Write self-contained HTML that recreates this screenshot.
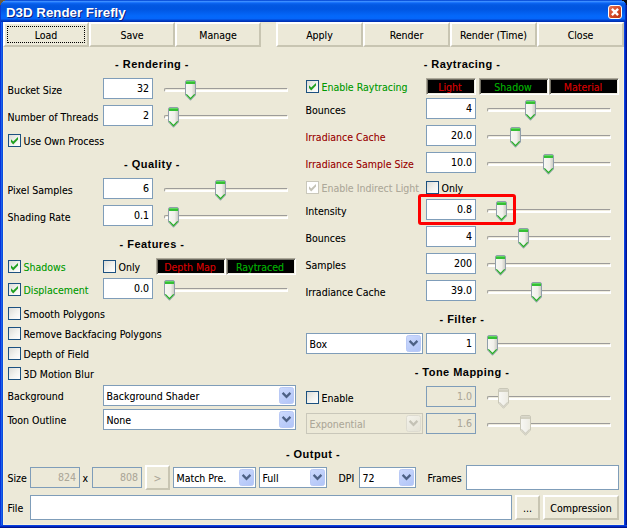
<!DOCTYPE html>
<html><head><meta charset="utf-8"><title>D3D Render Firefly</title>
<style>
html,body{margin:0;padding:0;}
body{width:628px;height:529px;background:#fff;overflow:hidden;position:relative;
 font-family:"DejaVu Sans Condensed","Liberation Sans",sans-serif;font-size:10.5px;color:#000;text-shadow:0 0 0 rgba(0,0,0,.25);}
#win{position:absolute;left:0;top:0;width:627px;height:528px;background:#ece9d8;overflow:hidden;}
#win *{box-sizing:border-box;}
.abs,.lbl,.btn,.inp,.cb,.hd,.trk,.th,.cmb,.dd,.bb{position:absolute;white-space:nowrap;}
#tb{position:absolute;left:0;top:0;width:627px;height:22px;
 background:linear-gradient(to bottom,#0a4fd8 0px,#0f55dd 0.6px,#3b8dff 1.5px,#1c74fb 2.5px,#0a62ee 3.5px,#0358e2 5px,#0055e1 9px,#0360f0 13px,#0468fb 16px,#0566fa 18.6px,#0354e4 19.5px,#0140c8 20.5px,#0031b5 21.5px,#0031b5 22px);}
#tbl{position:absolute;left:0;top:22px;width:3px;height:506px;background:linear-gradient(to right,#0831d9 0,#0831d9 1px,#1a62ea 1px,#1a62ea 2px,#0a4cde 2px);}
#tbr{position:absolute;left:624px;top:22px;width:3px;height:506px;background:linear-gradient(to right,#0a40e0 0,#0a40e0 1px,#0028c0 1px,#0028c0 2px,#001590 2px);}
#tbb{position:absolute;left:0;top:525px;width:627px;height:3px;background:linear-gradient(to bottom,#0a40e0 0,#0a40e0 1px,#0028c0 1px,#0028c0 2px,#001590 2px);}
#title{position:absolute;left:6px;top:5px;font:bold 13.3px/16px "Liberation Sans",sans-serif;color:#fff;text-shadow:1px 1px 0 #0a1f80;}
.lbl{line-height:13px;height:13px;}
.btn{height:25px;border:2px solid;border-color:#fff #c8c5b2 #c8c5b2 #fff;background:#ece9d8;text-align:center;line-height:20px;}
.inp{border:1px solid #7f9db9;background:#fff;text-align:right;padding-right:3px;line-height:16px;}
.inp.dis{background:#ece9d8;color:#aca899;}
.hd{font:bold 11px/14px "Liberation Sans",sans-serif;letter-spacing:0.46px;text-align:center;width:140px;text-shadow:none;}
.cb{width:13px;height:13px;border:1px solid #1c5180;background:linear-gradient(135deg,#dcdcd7 0%,#f3f3ef 55%,#fff 100%);}
.cb.dis{border-color:#cac8bb;background:#fff;}
.trk{height:4px;border:1px solid;border-color:#9d9c99 #fff #fff #9d9c99;background:linear-gradient(#efecde 50%,#fff 50%);border-radius:2px 0 0 2px;}
.th{width:11px;height:21px;}
.cmb{border:1px solid #7f9db9;background:#fff;line-height:21px;padding-left:2.5px;height:21px;}
.cmb.dis{background:#ece9d8;border-color:#c9c7ba;color:#aca899;}
.bb{border:1px solid;border-color:#aca899 #fff #fff #aca899;box-shadow:inset 1px 1px 0 #716f64,inset -1px -1px 0 #f1efe2;padding:1px 2px 1px 0;background:#000;text-align:center;line-height:15px;height:17px;overflow:hidden;}
.g{color:#009900;text-shadow:0 0 0 rgba(0,153,0,.25);} .r{color:#990000;text-shadow:0 0 0 rgba(153,0,0,.25);} .bb.r{color:#cc0000;text-shadow:0 0 0 rgba(204,0,0,.6);} .bb.g{color:#00a800;text-shadow:0 0 0 rgba(0,168,0,.6);} .gr,.dis{color:#aca899;text-shadow:0 0 0 rgba(172,168,153,.25);}
</style></head>
<body>
<div id="win">
<div id="tb"></div><div id="tbl"></div><div id="tbr"></div><div id="tbb"></div>
<div id="title">D3D Render Firefly</div>
<svg class="abs" style="left:608px;top:5px" width="14" height="14" viewBox="0 0 14 14"><defs><linearGradient id="cg" x1="0" x2="1" y1="0" y2="1"><stop offset="0" stop-color="#e8795a"/><stop offset="0.5" stop-color="#d54a26"/><stop offset="1" stop-color="#b8320f"/></linearGradient></defs><rect x="0.5" y="0.5" width="13" height="13" rx="2.5" fill="url(#cg)" stroke="#fff"/><path d="M3.9 3.9 L10.1 10.1 M10.1 3.9 L3.9 10.1" stroke="#fff" stroke-width="2.4" fill="none"/></svg>
<div class="abs" style="left:0px;top:0px;width:1px;height:22px;background:#0a3bd0"></div>
<div class="abs" style="left:626px;top:0px;width:1px;height:22px;background:#001c9c"></div>
<div class="abs" style="left:625px;top:0px;width:1px;height:22px;background:#0632c4"></div>
<div class="abs" style="left:0px;top:0px;width:5px;height:1px;background:#6b5b3d"></div>
<div class="abs" style="left:0px;top:1px;width:3px;height:1px;background:#6b5b3d"></div>
<div class="abs" style="left:0px;top:2px;width:2px;height:1px;background:#6b5b3d"></div>
<div class="abs" style="left:0px;top:3px;width:1px;height:2px;background:#6b5b3d"></div>
<div class="abs" style="left:622px;top:0px;width:6px;height:1px;background:#0c0c10"></div>
<div class="abs" style="left:624px;top:1px;width:4px;height:1px;background:#0c0c10"></div>
<div class="abs" style="left:625px;top:2px;width:3px;height:1px;background:#0c0c10"></div>
<div class="abs" style="left:626px;top:3px;width:2px;height:2px;background:#0c0c10"></div>
<div class="abs" style="left:3px;top:47px;width:1px;height:478px;background:#f6f1dc"></div>
<div class="abs" style="left:623px;top:47px;width:1px;height:478px;background:#f6f1dc"></div>
<div class="abs" style="left:3px;top:524px;width:621px;height:1px;background:#f6f1dc"></div>
<div class="btn " style="left:3px;top:22px;width:86px;height:25px;line-height:22px;">Load</div>
<div class="abs" style="left:7px;top:26px;width:78px;height:17px;border:1px dotted #000"></div>
<div class="btn " style="left:89px;top:22px;width:86px;height:25px;line-height:22px;">Save</div>
<div class="btn " style="left:175px;top:22px;width:86px;height:25px;line-height:22px;">Manage</div>
<div class="btn " style="left:276px;top:22px;width:87px;height:25px;line-height:22px;">Apply</div>
<div class="btn " style="left:363px;top:22px;width:87px;height:25px;line-height:22px;">Render</div>
<div class="btn " style="left:450px;top:22px;width:87px;height:25px;line-height:22px;">Render (Time)</div>
<div class="btn " style="left:537px;top:22px;width:87px;height:25px;line-height:22px;">Close</div>
<div class="hd" style="left:82px;top:57px">- Rendering -</div>
<div class="lbl " style="left:7.5px;top:84px">Bucket Size</div>
<div class="inp " style="left:103px;top:78px;width:50px;height:21px;line-height:18px">32</div>
<div class="trk" style="left:164px;top:88px;width:124px"></div>
<svg class="th" style="left:185px;top:80px" width="11" height="21" viewBox="0 0 11 21"><defs><linearGradient id="tg1" x1="0" x2="1" y1="0" y2="0"><stop offset="0" stop-color="#f8f8f4"/><stop offset="0.6" stop-color="#f1f0ea"/><stop offset="1" stop-color="#c9c9c0"/></linearGradient></defs><path d="M0.5 2 Q0.5 0.5 2 0.5 L9 0.5 Q10.5 0.5 10.5 2 L10.5 15 L5.5 20.3 L0.5 15 Z" fill="url(#tg1)" stroke="#909eaa" stroke-width="1"/><path d="M1 4 L1 2 Q1 1 2 1 L9 1 Q10 1 10 2 L10 4 Z" fill="#35bf35"/><path d="M1 1.9 Q1 1 2 1 L9 1 Q10 1 10 1.9 Z" fill="#62d862"/><path d="M1.3 14.4 L5.5 18.8 L9.7 14.4" fill="none" stroke="#25ab25" stroke-width="1.25"/></svg>
<div class="lbl " style="left:7.5px;top:111px">Number of Threads</div>
<div class="inp " style="left:103px;top:105px;width:50px;height:21px;line-height:18px">2</div>
<div class="trk" style="left:164px;top:115px;width:124px"></div>
<svg class="th" style="left:168px;top:107px" width="11" height="21" viewBox="0 0 11 21"><defs><linearGradient id="tg2" x1="0" x2="1" y1="0" y2="0"><stop offset="0" stop-color="#f8f8f4"/><stop offset="0.6" stop-color="#f1f0ea"/><stop offset="1" stop-color="#c9c9c0"/></linearGradient></defs><path d="M0.5 2 Q0.5 0.5 2 0.5 L9 0.5 Q10.5 0.5 10.5 2 L10.5 15 L5.5 20.3 L0.5 15 Z" fill="url(#tg2)" stroke="#909eaa" stroke-width="1"/><path d="M1 4 L1 2 Q1 1 2 1 L9 1 Q10 1 10 2 L10 4 Z" fill="#35bf35"/><path d="M1 1.9 Q1 1 2 1 L9 1 Q10 1 10 1.9 Z" fill="#62d862"/><path d="M1.3 14.4 L5.5 18.8 L9.7 14.4" fill="none" stroke="#25ab25" stroke-width="1.25"/></svg>
<div class="cb" style="left:8px;top:134px"></div>
<svg class="abs" style="left:8px;top:134px" width="13" height="13" viewBox="0 0 13 13"><path d="M3 5.2 L5.2 7.6 L10 2.9 L10 5.6 L5.2 10.4 L3 8 Z" fill="#21a121"/></svg>
<div class="lbl " style="left:23.5px;top:135px">Use Own Process</div>
<div class="hd" style="left:82px;top:157px">- Quality -</div>
<div class="lbl " style="left:7.5px;top:184px">Pixel Samples</div>
<div class="inp " style="left:103px;top:178px;width:50px;height:21px;line-height:18px">6</div>
<div class="trk" style="left:164px;top:188px;width:124px"></div>
<svg class="th" style="left:215px;top:180px" width="11" height="21" viewBox="0 0 11 21"><defs><linearGradient id="tg3" x1="0" x2="1" y1="0" y2="0"><stop offset="0" stop-color="#f8f8f4"/><stop offset="0.6" stop-color="#f1f0ea"/><stop offset="1" stop-color="#c9c9c0"/></linearGradient></defs><path d="M0.5 2 Q0.5 0.5 2 0.5 L9 0.5 Q10.5 0.5 10.5 2 L10.5 15 L5.5 20.3 L0.5 15 Z" fill="url(#tg3)" stroke="#909eaa" stroke-width="1"/><path d="M1 4 L1 2 Q1 1 2 1 L9 1 Q10 1 10 2 L10 4 Z" fill="#35bf35"/><path d="M1 1.9 Q1 1 2 1 L9 1 Q10 1 10 1.9 Z" fill="#62d862"/><path d="M1.3 14.4 L5.5 18.8 L9.7 14.4" fill="none" stroke="#25ab25" stroke-width="1.25"/></svg>
<div class="lbl " style="left:7.5px;top:211px">Shading Rate</div>
<div class="inp " style="left:103px;top:205px;width:50px;height:21px;line-height:18px">0.1</div>
<div class="trk" style="left:164px;top:215px;width:124px"></div>
<svg class="th" style="left:168px;top:207px" width="11" height="21" viewBox="0 0 11 21"><defs><linearGradient id="tg4" x1="0" x2="1" y1="0" y2="0"><stop offset="0" stop-color="#f8f8f4"/><stop offset="0.6" stop-color="#f1f0ea"/><stop offset="1" stop-color="#c9c9c0"/></linearGradient></defs><path d="M0.5 2 Q0.5 0.5 2 0.5 L9 0.5 Q10.5 0.5 10.5 2 L10.5 15 L5.5 20.3 L0.5 15 Z" fill="url(#tg4)" stroke="#909eaa" stroke-width="1"/><path d="M1 4 L1 2 Q1 1 2 1 L9 1 Q10 1 10 2 L10 4 Z" fill="#35bf35"/><path d="M1 1.9 Q1 1 2 1 L9 1 Q10 1 10 1.9 Z" fill="#62d862"/><path d="M1.3 14.4 L5.5 18.8 L9.7 14.4" fill="none" stroke="#25ab25" stroke-width="1.25"/></svg>
<div class="hd" style="left:82px;top:237px">- Features -</div>
<div class="cb" style="left:8px;top:260px"></div>
<svg class="abs" style="left:8px;top:260px" width="13" height="13" viewBox="0 0 13 13"><path d="M3 5.2 L5.2 7.6 L10 2.9 L10 5.6 L5.2 10.4 L3 8 Z" fill="#21a121"/></svg>
<div class="lbl g" style="left:23.5px;top:261px">Shadows</div>
<div class="cb" style="left:103px;top:260px"></div>
<div class="lbl " style="left:118.5px;top:261px">Only</div>
<div class="bb r" style="left:156px;top:258px;width:70px">Depth Map</div>
<div class="bb g" style="left:226px;top:258px;width:70px">Raytraced</div>
<div class="cb" style="left:8px;top:283px"></div>
<svg class="abs" style="left:8px;top:283px" width="13" height="13" viewBox="0 0 13 13"><path d="M3 5.2 L5.2 7.6 L10 2.9 L10 5.6 L5.2 10.4 L3 8 Z" fill="#21a121"/></svg>
<div class="lbl g" style="left:23.5px;top:284px">Displacement</div>
<div class="inp " style="left:103px;top:278px;width:50px;height:21px;line-height:18px">0.0</div>
<div class="trk" style="left:164px;top:288px;width:124px"></div>
<svg class="th" style="left:164px;top:280px" width="11" height="21" viewBox="0 0 11 21"><defs><linearGradient id="tg5" x1="0" x2="1" y1="0" y2="0"><stop offset="0" stop-color="#f8f8f4"/><stop offset="0.6" stop-color="#f1f0ea"/><stop offset="1" stop-color="#c9c9c0"/></linearGradient></defs><path d="M0.5 2 Q0.5 0.5 2 0.5 L9 0.5 Q10.5 0.5 10.5 2 L10.5 15 L5.5 20.3 L0.5 15 Z" fill="url(#tg5)" stroke="#909eaa" stroke-width="1"/><path d="M1 4 L1 2 Q1 1 2 1 L9 1 Q10 1 10 2 L10 4 Z" fill="#35bf35"/><path d="M1 1.9 Q1 1 2 1 L9 1 Q10 1 10 1.9 Z" fill="#62d862"/><path d="M1.3 14.4 L5.5 18.8 L9.7 14.4" fill="none" stroke="#25ab25" stroke-width="1.25"/></svg>
<div class="cb" style="left:8px;top:307px"></div>
<div class="lbl " style="left:23.5px;top:308px">Smooth Polygons</div>
<div class="cb" style="left:8px;top:327px"></div>
<div class="lbl " style="left:23.5px;top:328px">Remove Backfacing Polygons</div>
<div class="cb" style="left:8px;top:347px"></div>
<div class="lbl " style="left:23.5px;top:348px">Depth of Field</div>
<div class="cb" style="left:8px;top:367px"></div>
<div class="lbl " style="left:23.5px;top:368px">3D Motion Blur</div>
<div class="lbl " style="left:7.5px;top:390px">Background</div>
<div class="cmb" style="left:103px;top:385px;width:193px">Background Shader</div>
<svg class="dd" style="left:279px;top:387px" width="15" height="17" viewBox="0 0 15 17"><defs><linearGradient id="dg1" x1="0" x2="0.6" y1="0" y2="1"><stop offset="0" stop-color="#cddafd"/><stop offset="1" stop-color="#b4c7f8"/></linearGradient></defs><rect x="0.5" y="0.5" width="14" height="16" rx="2" fill="url(#dg1)" stroke="#b9c9f5"/><path d="M3.6 5.9 L7.5 9.8 L11.4 5.9" fill="none" stroke="#4d6185" stroke-width="2.3"/></svg>
<div class="lbl " style="left:7.5px;top:414px">Toon Outline</div>
<div class="cmb" style="left:103px;top:409px;width:193px">None</div>
<svg class="dd" style="left:279px;top:411px" width="15" height="17" viewBox="0 0 15 17"><defs><linearGradient id="dg2" x1="0" x2="0.6" y1="0" y2="1"><stop offset="0" stop-color="#cddafd"/><stop offset="1" stop-color="#b4c7f8"/></linearGradient></defs><rect x="0.5" y="0.5" width="14" height="16" rx="2" fill="url(#dg2)" stroke="#b9c9f5"/><path d="M3.6 5.9 L7.5 9.8 L11.4 5.9" fill="none" stroke="#4d6185" stroke-width="2.3"/></svg>
<div class="hd" style="left:392px;top:57px">- Raytracing -</div>
<div class="cb" style="left:306px;top:80px"></div>
<svg class="abs" style="left:306px;top:80px" width="13" height="13" viewBox="0 0 13 13"><path d="M3 5.2 L5.2 7.6 L10 2.9 L10 5.6 L5.2 10.4 L3 8 Z" fill="#21a121"/></svg>
<div class="lbl g" style="left:321.5px;top:81px">Enable Raytracing</div>
<div class="bb r" style="left:426px;top:78px;width:50px">Light</div>
<div class="bb g" style="left:479px;top:78px;width:70px">Shadow</div>
<div class="bb r" style="left:549px;top:78px;width:70px">Material</div>
<div class="lbl " style="left:305.5px;top:104px">Bounces</div>
<div class="inp " style="left:426px;top:98px;width:50px;height:21px;line-height:18px">4</div>
<div class="trk" style="left:487px;top:108px;width:124px"></div>
<svg class="th" style="left:525px;top:100px" width="11" height="21" viewBox="0 0 11 21"><defs><linearGradient id="tg6" x1="0" x2="1" y1="0" y2="0"><stop offset="0" stop-color="#f8f8f4"/><stop offset="0.6" stop-color="#f1f0ea"/><stop offset="1" stop-color="#c9c9c0"/></linearGradient></defs><path d="M0.5 2 Q0.5 0.5 2 0.5 L9 0.5 Q10.5 0.5 10.5 2 L10.5 15 L5.5 20.3 L0.5 15 Z" fill="url(#tg6)" stroke="#909eaa" stroke-width="1"/><path d="M1 4 L1 2 Q1 1 2 1 L9 1 Q10 1 10 2 L10 4 Z" fill="#35bf35"/><path d="M1 1.9 Q1 1 2 1 L9 1 Q10 1 10 1.9 Z" fill="#62d862"/><path d="M1.3 14.4 L5.5 18.8 L9.7 14.4" fill="none" stroke="#25ab25" stroke-width="1.25"/></svg>
<div class="lbl r" style="left:305.5px;top:131px">Irradiance Cache</div>
<div class="inp " style="left:426px;top:125px;width:50px;height:21px;line-height:18px">20.0</div>
<div class="trk" style="left:487px;top:135px;width:124px"></div>
<svg class="th" style="left:510px;top:127px" width="11" height="21" viewBox="0 0 11 21"><defs><linearGradient id="tg7" x1="0" x2="1" y1="0" y2="0"><stop offset="0" stop-color="#f8f8f4"/><stop offset="0.6" stop-color="#f1f0ea"/><stop offset="1" stop-color="#c9c9c0"/></linearGradient></defs><path d="M0.5 2 Q0.5 0.5 2 0.5 L9 0.5 Q10.5 0.5 10.5 2 L10.5 15 L5.5 20.3 L0.5 15 Z" fill="url(#tg7)" stroke="#909eaa" stroke-width="1"/><path d="M1 4 L1 2 Q1 1 2 1 L9 1 Q10 1 10 2 L10 4 Z" fill="#35bf35"/><path d="M1 1.9 Q1 1 2 1 L9 1 Q10 1 10 1.9 Z" fill="#62d862"/><path d="M1.3 14.4 L5.5 18.8 L9.7 14.4" fill="none" stroke="#25ab25" stroke-width="1.25"/></svg>
<div class="lbl r" style="left:305.5px;top:158px">Irradiance Sample Size</div>
<div class="inp " style="left:426px;top:152px;width:50px;height:21px;line-height:18px">10.0</div>
<div class="trk" style="left:487px;top:162px;width:124px"></div>
<svg class="th" style="left:543px;top:154px" width="11" height="21" viewBox="0 0 11 21"><defs><linearGradient id="tg8" x1="0" x2="1" y1="0" y2="0"><stop offset="0" stop-color="#f8f8f4"/><stop offset="0.6" stop-color="#f1f0ea"/><stop offset="1" stop-color="#c9c9c0"/></linearGradient></defs><path d="M0.5 2 Q0.5 0.5 2 0.5 L9 0.5 Q10.5 0.5 10.5 2 L10.5 15 L5.5 20.3 L0.5 15 Z" fill="url(#tg8)" stroke="#909eaa" stroke-width="1"/><path d="M1 4 L1 2 Q1 1 2 1 L9 1 Q10 1 10 2 L10 4 Z" fill="#35bf35"/><path d="M1 1.9 Q1 1 2 1 L9 1 Q10 1 10 1.9 Z" fill="#62d862"/><path d="M1.3 14.4 L5.5 18.8 L9.7 14.4" fill="none" stroke="#25ab25" stroke-width="1.25"/></svg>
<div class="cb dis" style="left:306px;top:181px"></div>
<svg class="abs" style="left:306px;top:181px" width="13" height="13" viewBox="0 0 13 13"><path d="M3 5.2 L5.2 7.6 L10 2.9 L10 5.6 L5.2 10.4 L3 8 Z" fill="#c4c2b6"/></svg>
<div class="lbl gr" style="left:321.5px;top:182px">Enable Indirect Light</div>
<div class="cb" style="left:426px;top:181px"></div>
<div class="lbl " style="left:441.5px;top:182px">Only</div>
<div class="lbl " style="left:305.5px;top:205px">Intensity</div>
<div class="inp " style="left:426px;top:199px;width:50px;height:21px;line-height:18px">0.8</div>
<div class="trk" style="left:487px;top:209px;width:124px"></div>
<svg class="th" style="left:496px;top:201px" width="11" height="21" viewBox="0 0 11 21"><defs><linearGradient id="tg9" x1="0" x2="1" y1="0" y2="0"><stop offset="0" stop-color="#f8f8f4"/><stop offset="0.6" stop-color="#f1f0ea"/><stop offset="1" stop-color="#c9c9c0"/></linearGradient></defs><path d="M0.5 2 Q0.5 0.5 2 0.5 L9 0.5 Q10.5 0.5 10.5 2 L10.5 15 L5.5 20.3 L0.5 15 Z" fill="url(#tg9)" stroke="#909eaa" stroke-width="1"/><path d="M1 4 L1 2 Q1 1 2 1 L9 1 Q10 1 10 2 L10 4 Z" fill="#35bf35"/><path d="M1 1.9 Q1 1 2 1 L9 1 Q10 1 10 1.9 Z" fill="#62d862"/><path d="M1.3 14.4 L5.5 18.8 L9.7 14.4" fill="none" stroke="#25ab25" stroke-width="1.25"/></svg>
<div class="lbl " style="left:305.5px;top:232px">Bounces</div>
<div class="inp " style="left:426px;top:226px;width:50px;height:21px;line-height:18px">4</div>
<div class="trk" style="left:487px;top:236px;width:124px"></div>
<svg class="th" style="left:518px;top:228px" width="11" height="21" viewBox="0 0 11 21"><defs><linearGradient id="tg10" x1="0" x2="1" y1="0" y2="0"><stop offset="0" stop-color="#f8f8f4"/><stop offset="0.6" stop-color="#f1f0ea"/><stop offset="1" stop-color="#c9c9c0"/></linearGradient></defs><path d="M0.5 2 Q0.5 0.5 2 0.5 L9 0.5 Q10.5 0.5 10.5 2 L10.5 15 L5.5 20.3 L0.5 15 Z" fill="url(#tg10)" stroke="#909eaa" stroke-width="1"/><path d="M1 4 L1 2 Q1 1 2 1 L9 1 Q10 1 10 2 L10 4 Z" fill="#35bf35"/><path d="M1 1.9 Q1 1 2 1 L9 1 Q10 1 10 1.9 Z" fill="#62d862"/><path d="M1.3 14.4 L5.5 18.8 L9.7 14.4" fill="none" stroke="#25ab25" stroke-width="1.25"/></svg>
<div class="lbl " style="left:305.5px;top:259px">Samples</div>
<div class="inp " style="left:426px;top:253px;width:50px;height:21px;line-height:18px">200</div>
<div class="trk" style="left:487px;top:263px;width:124px"></div>
<svg class="th" style="left:495px;top:255px" width="11" height="21" viewBox="0 0 11 21"><defs><linearGradient id="tg11" x1="0" x2="1" y1="0" y2="0"><stop offset="0" stop-color="#f8f8f4"/><stop offset="0.6" stop-color="#f1f0ea"/><stop offset="1" stop-color="#c9c9c0"/></linearGradient></defs><path d="M0.5 2 Q0.5 0.5 2 0.5 L9 0.5 Q10.5 0.5 10.5 2 L10.5 15 L5.5 20.3 L0.5 15 Z" fill="url(#tg11)" stroke="#909eaa" stroke-width="1"/><path d="M1 4 L1 2 Q1 1 2 1 L9 1 Q10 1 10 2 L10 4 Z" fill="#35bf35"/><path d="M1 1.9 Q1 1 2 1 L9 1 Q10 1 10 1.9 Z" fill="#62d862"/><path d="M1.3 14.4 L5.5 18.8 L9.7 14.4" fill="none" stroke="#25ab25" stroke-width="1.25"/></svg>
<div class="lbl " style="left:305.5px;top:286px">Irradiance Cache</div>
<div class="inp " style="left:426px;top:280px;width:50px;height:21px;line-height:18px">39.0</div>
<div class="trk" style="left:487px;top:290px;width:124px"></div>
<svg class="th" style="left:531px;top:282px" width="11" height="21" viewBox="0 0 11 21"><defs><linearGradient id="tg12" x1="0" x2="1" y1="0" y2="0"><stop offset="0" stop-color="#f8f8f4"/><stop offset="0.6" stop-color="#f1f0ea"/><stop offset="1" stop-color="#c9c9c0"/></linearGradient></defs><path d="M0.5 2 Q0.5 0.5 2 0.5 L9 0.5 Q10.5 0.5 10.5 2 L10.5 15 L5.5 20.3 L0.5 15 Z" fill="url(#tg12)" stroke="#909eaa" stroke-width="1"/><path d="M1 4 L1 2 Q1 1 2 1 L9 1 Q10 1 10 2 L10 4 Z" fill="#35bf35"/><path d="M1 1.9 Q1 1 2 1 L9 1 Q10 1 10 1.9 Z" fill="#62d862"/><path d="M1.3 14.4 L5.5 18.8 L9.7 14.4" fill="none" stroke="#25ab25" stroke-width="1.25"/></svg>
<div class="hd" style="left:392px;top:312px">- Filter -</div>
<div class="cmb" style="left:306px;top:333px;width:117px">Box</div>
<svg class="dd" style="left:406px;top:335px" width="15" height="17" viewBox="0 0 15 17"><defs><linearGradient id="dg3" x1="0" x2="0.6" y1="0" y2="1"><stop offset="0" stop-color="#cddafd"/><stop offset="1" stop-color="#b4c7f8"/></linearGradient></defs><rect x="0.5" y="0.5" width="14" height="16" rx="2" fill="url(#dg3)" stroke="#b9c9f5"/><path d="M3.6 5.9 L7.5 9.8 L11.4 5.9" fill="none" stroke="#4d6185" stroke-width="2.3"/></svg>
<div class="inp " style="left:426px;top:333px;width:50px;height:21px;line-height:18px">1</div>
<div class="trk" style="left:487px;top:343px;width:124px"></div>
<svg class="th" style="left:487px;top:335px" width="11" height="21" viewBox="0 0 11 21"><defs><linearGradient id="tg13" x1="0" x2="1" y1="0" y2="0"><stop offset="0" stop-color="#f8f8f4"/><stop offset="0.6" stop-color="#f1f0ea"/><stop offset="1" stop-color="#c9c9c0"/></linearGradient></defs><path d="M0.5 2 Q0.5 0.5 2 0.5 L9 0.5 Q10.5 0.5 10.5 2 L10.5 15 L5.5 20.3 L0.5 15 Z" fill="url(#tg13)" stroke="#909eaa" stroke-width="1"/><path d="M1 4 L1 2 Q1 1 2 1 L9 1 Q10 1 10 2 L10 4 Z" fill="#35bf35"/><path d="M1 1.9 Q1 1 2 1 L9 1 Q10 1 10 1.9 Z" fill="#62d862"/><path d="M1.3 14.4 L5.5 18.8 L9.7 14.4" fill="none" stroke="#25ab25" stroke-width="1.25"/></svg>
<div class="hd" style="left:392px;top:365px">- Tone Mapping -</div>
<div class="cb" style="left:306px;top:391px"></div>
<div class="lbl " style="left:321.5px;top:392px">Enable</div>
<div class="inp dis" style="left:426px;top:386px;width:50px;height:21px;line-height:18px">1.0</div>
<div class="trk" style="left:487px;top:396px;width:124px"></div>
<svg class="th" style="left:498px;top:388px" width="11" height="21" viewBox="0 0 11 21"><defs><linearGradient id="tg14" x1="0" x2="1" y1="0" y2="0"><stop offset="0" stop-color="#f8f8f4"/><stop offset="0.6" stop-color="#f1f0ea"/><stop offset="1" stop-color="#ecebe0"/></linearGradient></defs><path d="M0.5 2 Q0.5 0.5 2 0.5 L9 0.5 Q10.5 0.5 10.5 2 L10.5 15 L5.5 20.3 L0.5 15 Z" fill="url(#tg14)" stroke="#c9c7b8" stroke-width="1"/><path d="M1 4 L1 2 Q1 1 2 1 L9 1 Q10 1 10 2 L10 4 Z" fill="#d2d0c1"/><path d="M1 1.9 Q1 1 2 1 L9 1 Q10 1 10 1.9 Z" fill="#dad8cb"/><path d="M1.3 14.4 L5.5 18.8 L9.7 14.4" fill="none" stroke="#d0cec0" stroke-width="1.25"/></svg>
<div class="cmb dis" style="left:306px;top:413px;width:117px">Exponential</div>
<svg class="dd" style="left:406px;top:415px" width="15" height="17" viewBox="0 0 15 17"><defs><linearGradient id="dg4" x1="0" x2="0.6" y1="0" y2="1"><stop offset="0" stop-color="#f4f3ec"/><stop offset="1" stop-color="#e6e4d8"/></linearGradient></defs><rect x="0.5" y="0.5" width="14" height="16" rx="2" fill="url(#dg4)" stroke="#dddbd0"/><path d="M3.6 5.9 L7.5 9.8 L11.4 5.9" fill="none" stroke="#c4c2b6" stroke-width="2.3"/></svg>
<div class="inp dis" style="left:426px;top:413px;width:50px;height:21px;line-height:18px">1.6</div>
<div class="trk" style="left:487px;top:423px;width:124px"></div>
<svg class="th" style="left:520px;top:415px" width="11" height="21" viewBox="0 0 11 21"><defs><linearGradient id="tg15" x1="0" x2="1" y1="0" y2="0"><stop offset="0" stop-color="#f8f8f4"/><stop offset="0.6" stop-color="#f1f0ea"/><stop offset="1" stop-color="#ecebe0"/></linearGradient></defs><path d="M0.5 2 Q0.5 0.5 2 0.5 L9 0.5 Q10.5 0.5 10.5 2 L10.5 15 L5.5 20.3 L0.5 15 Z" fill="url(#tg15)" stroke="#c9c7b8" stroke-width="1"/><path d="M1 4 L1 2 Q1 1 2 1 L9 1 Q10 1 10 2 L10 4 Z" fill="#d2d0c1"/><path d="M1 1.9 Q1 1 2 1 L9 1 Q10 1 10 1.9 Z" fill="#dad8cb"/><path d="M1.3 14.4 L5.5 18.8 L9.7 14.4" fill="none" stroke="#d0cec0" stroke-width="1.25"/></svg>
<div class="abs" style="left:418px;top:194px;width:98px;height:31px;border:3px solid #fe0000;border-radius:3px"></div>
<div class="hd" style="left:243px;top:447px">- Output -</div>
<div class="lbl " style="left:7.5px;top:472px">Size</div>
<div class="inp dis" style="left:30px;top:467px;width:50px;height:21px;line-height:18px">824</div>
<div class="lbl " style="left:82.5px;top:472px">x</div>
<div class="inp dis" style="left:92px;top:467px;width:50px;height:21px;line-height:18px">808</div>
<div class="btn gr" style="left:145px;top:465px;width:25px;height:25px;line-height:22px;">&gt;</div>
<div class="cmb" style="left:173px;top:467px;width:83px">Match Pre.</div>
<svg class="dd" style="left:239px;top:469px" width="15" height="17" viewBox="0 0 15 17"><defs><linearGradient id="dg5" x1="0" x2="0.6" y1="0" y2="1"><stop offset="0" stop-color="#cddafd"/><stop offset="1" stop-color="#b4c7f8"/></linearGradient></defs><rect x="0.5" y="0.5" width="14" height="16" rx="2" fill="url(#dg5)" stroke="#b9c9f5"/><path d="M3.6 5.9 L7.5 9.8 L11.4 5.9" fill="none" stroke="#4d6185" stroke-width="2.3"/></svg>
<div class="cmb" style="left:259px;top:467px;width:68px">Full</div>
<svg class="dd" style="left:310px;top:469px" width="15" height="17" viewBox="0 0 15 17"><defs><linearGradient id="dg6" x1="0" x2="0.6" y1="0" y2="1"><stop offset="0" stop-color="#cddafd"/><stop offset="1" stop-color="#b4c7f8"/></linearGradient></defs><rect x="0.5" y="0.5" width="14" height="16" rx="2" fill="url(#dg6)" stroke="#b9c9f5"/><path d="M3.6 5.9 L7.5 9.8 L11.4 5.9" fill="none" stroke="#4d6185" stroke-width="2.3"/></svg>
<div class="lbl " style="left:338.5px;top:472px">DPI</div>
<div class="cmb" style="left:359px;top:467px;width:57px">72</div>
<svg class="dd" style="left:399px;top:469px" width="15" height="17" viewBox="0 0 15 17"><defs><linearGradient id="dg7" x1="0" x2="0.6" y1="0" y2="1"><stop offset="0" stop-color="#cddafd"/><stop offset="1" stop-color="#b4c7f8"/></linearGradient></defs><rect x="0.5" y="0.5" width="14" height="16" rx="2" fill="url(#dg7)" stroke="#b9c9f5"/><path d="M3.6 5.9 L7.5 9.8 L11.4 5.9" fill="none" stroke="#4d6185" stroke-width="2.3"/></svg>
<div class="lbl " style="left:427.5px;top:472px">Frames</div>
<div class="inp " style="left:466px;top:465px;width:153px;height:25px;line-height:22px"></div>
<div class="lbl " style="left:7.5px;top:502px">File</div>
<div class="inp " style="left:30px;top:495px;width:482px;height:25px;line-height:22px"></div>
<div class="btn " style="left:515px;top:495px;width:25px;height:25px;line-height:22px;">...</div>
<div class="btn " style="left:543px;top:495px;width:76px;height:25px;line-height:22px;">Compression</div>
</div>
</body></html>
